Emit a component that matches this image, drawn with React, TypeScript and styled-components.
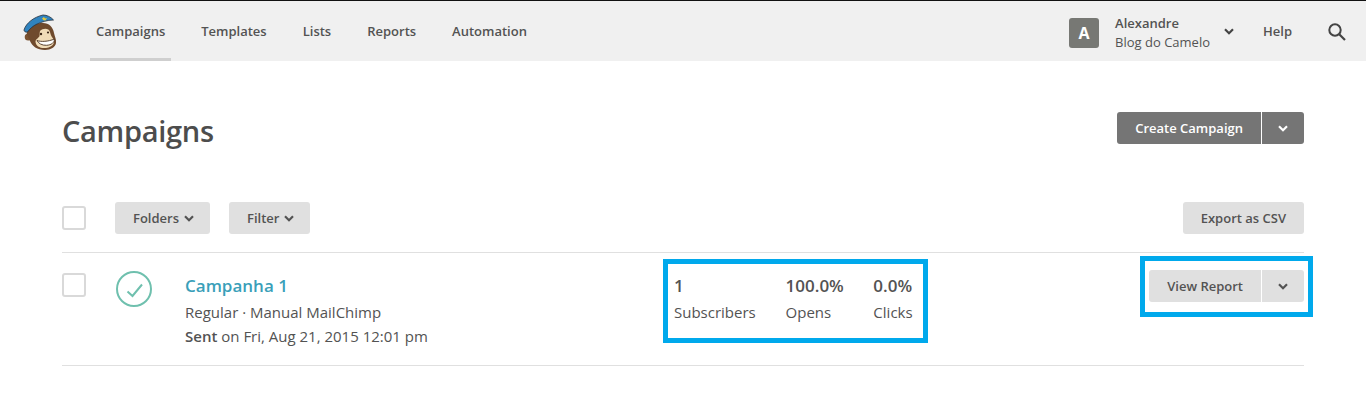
import React from 'react';
import styled, { createGlobalStyle } from 'styled-components';

const GlobalStyle = createGlobalStyle`
  html, body {
    margin: 0;
    padding: 0;
    background: #fff;
    font-family: "Open Sans", "Liberation Sans", sans-serif;
    color: #535353;
  }
`;

const TopBar = styled.header`
  display: flex;
  align-items: stretch;
  height: 60px;
  border-top: 1px solid #111;
  background: #f0f0f0;
  padding: 0 19px 0 23px;
`;

const Logo = styled.div`
  display: flex;
  align-items: center;
  width: 67px;
  padding-top: 4px;
`;

const NavLinks = styled.nav`
  display: flex;
  flex: 1;
`;

const NavLink = styled.a<{ $active?: boolean }>`
  display: flex;
  align-items: center;
  box-sizing: border-box;
  height: 60px;
  padding: 0 6px 1px;
  margin-right: 24px;
  font-size: 13px;
  font-weight: 600;
  color: #535353;
  border-bottom: 3px solid ${(p) => (p.$active ? '#cfcfcf' : 'transparent')};
  border-top: 3px solid transparent;
`;

const Account = styled.div`
  display: flex;
  align-items: center;
`;

const Avatar = styled.div`
  display: flex;
  align-items: center;
  justify-content: center;
  width: 30px;
  height: 30px;
  margin: 4px 16px 0 0;
  border-radius: 3px;
  background: #777874;
  color: #fff;
  font-size: 16px;
  font-weight: 700;
`;

const AccountText = styled.div`
  display: flex;
  flex-direction: column;
  font-size: 13px;
  line-height: 19px;
  margin: 4px 14px 0 0;

  strong {
    font-weight: 600;
  }
`;

const HelpLink = styled.a`
  font-size: 13px;
  font-weight: 600;
  margin-left: 29px;
  margin-right: 36px;
`;

const Page = styled.main`
  padding: 0 62px;
`;

const TitleRow = styled.div`
  display: flex;
  align-items: flex-start;
  justify-content: space-between;
  padding-top: 51px;
  height: 90px;
`;

const Title = styled.h1`
  margin: -1px 0 0;
  font-size: 29px;
  line-height: 40px;
  font-weight: 600;
  color: #4d4d4d;
  letter-spacing: -0.3px;
`;

const SplitButton = styled.div`
  display: flex;
  gap: 1px;
`;

const Button = styled.button<{ $dark?: boolean; $side?: 'left' | 'right' }>`
  display: flex;
  align-items: center;
  justify-content: center;
  height: 32px;
  padding: 0 ${(p) => (p.$side === 'right' ? 16 : 18)}px;
  border: 0;
  font-family: inherit;
  font-size: 13px;
  font-weight: 600;
  background: ${(p) => (p.$dark ? '#757575' : '#e0e0e0')};
  color: ${(p) => (p.$dark ? '#fff' : '#535353')};
  border-radius: ${(p) =>
    p.$side === 'left' ? '3px 0 0 3px' : p.$side === 'right' ? '0 3px 3px 0' : '3px'};
`;

const MenuButton = styled(Button)`
  gap: 5px;
  padding-right: 16px;
`;

const ToolRow = styled.div`
  display: flex;
  align-items: center;
  height: 32px;
  padding-bottom: 18px;
  border-bottom: 1px solid #e0e0e0;
`;

const Checkbox = styled.span`
  display: block;
  box-sizing: border-box;
  width: 24px;
  height: 24px;
  border: 2px solid #d9d9d9;
  border-radius: 3px;
  background: #fff;
  flex-shrink: 0;
`;

const ToolButtons = styled.div`
  display: flex;
  flex: 1;
  gap: 19px;
  margin-left: 29px;
`;

const CampaignRow = styled.div`
  display: flex;
  align-items: flex-start;
  height: 112px;
  border-bottom: 1px solid #e0e0e0;
`;

const RowCheck = styled.div`
  margin-top: 20px;
`;

const StatusIcon = styled.div`
  margin: 18px 33px 0 30px;
  width: 36px;
  height: 36px;
`;

const Info = styled.div`
  width: 478px;
  padding-top: 21px;
  font-size: 15px;
  line-height: 24px;

  strong {
    font-weight: 600;
  }
`;

const CampaignName = styled.a`
  display: block;
  font-size: 17px;
  font-weight: 600;
  line-height: 24px;
  color: #3a9fb9;
  margin-bottom: 2px;
`;

const Stats = styled.div`
  display: flex;
  box-sizing: border-box;
  width: 265px;
  height: 84px;
  margin-top: 6px;
  padding: 9px 6px 0;
  border: 5px solid #00a9ec;
`;

const Stat = styled.div<{ $width: number }>`
  width: ${(p) => p.$width}px;
  font-size: 15px;
  line-height: 26px;

  strong {
    display: block;
    font-size: 17px;
    font-weight: 600;
  }
`;

const Actions = styled.div`
  position: relative;
  margin-left: auto;
  margin-top: 17px;
`;

const Highlight = styled.span`
  position: absolute;
  inset: -14px -9px -15px -9px;
  border: 5px solid #00a9ec;
`;

const Chevron = ({ color = '#535353' }: { color?: string }) => (
  <svg width="10" height="7" viewBox="0 0 10 7" fill="none">
    <path d="M1 1.300 5 5.200l4-3.900" stroke={color} strokeWidth="2.200" />
  </svg>
);

const Monkey = () => (
  <svg width="34" height="38" viewBox="0 0 34 38">
    <circle cx="5.300" cy="23" r="3.600" fill="#7a5230" />
    <path d="M4 17C7 11 13 9 20 9c6 0 10 4 11 10 .5 3 2.500 6 2 10-.6 4-5 7-11 7-8 0-13-4-15-9-1-3-4-6-3-10Z" fill="#6f4a2d" />
    <path d="M17 17c3-3 9-3 10 1 .7 2.500 1 4 3 6.500 2.500 3.500.5 8.500-7 9.500-6 .7-10-2-10.500-6-.2-3 3.500-4 4-6 .3-2 0-3.500.500-5Z" fill="#f0dcb8" />
    <path d="M14 26.500c4 1.500 11 1.200 17.500-1.500 0 3.500-3 6-8 6.300-4.500.2-8-1.800-9.500-4.800Z" fill="#fff" stroke="#4b3220" strokeWidth=".9" />
    <circle cx="18" cy="20" r="1.200" fill="#3a2618" />
    <circle cx="25" cy="18.500" r="1.100" fill="#3a2618" />
    <path d="M1 16C3 9 11 3 20 1c4 0 8 2 10.500 5C24 6 19 8 14 10c-4 2-7 4.500-9.500 8C2.500 18.500 1 17.500 1 16Z" fill="#2f83bf" stroke="#24303c" strokeWidth=".8" />
    <path d="M19 4.500 21 3l1 1.500 2-.5-1.500 2.500-2-.3Z" fill="#e8c93a" />
  </svg>
);

const SearchIcon = () => (
  <svg width="19" height="19" viewBox="0 0 19 19" fill="none">
    <circle cx="7" cy="8" r="5.700" stroke="#444" strokeWidth="2" />
    <path d="m11.200 12.200 5.800 5.800" stroke="#444" strokeWidth="2.200" />
  </svg>
);

const SentIcon = () => (
  <svg width="36" height="36" viewBox="0 0 36 36" fill="none">
    <circle cx="18" cy="18" r="17" stroke="#6fc0ae" strokeWidth="2" />
    <path d="m11.500 20.500 5 4.500 9.500-11.500" stroke="#6fc0ae" strokeWidth="2" />
  </svg>
);

const App: React.FC = () => {
  return (
    <>
      <GlobalStyle />
      <TopBar>
        <Logo>
          <Monkey />
        </Logo>
        <NavLinks>
          <NavLink $active>Campaigns</NavLink>
          <NavLink>Templates</NavLink>
          <NavLink>Lists</NavLink>
          <NavLink>Reports</NavLink>
          <NavLink>Automation</NavLink>
        </NavLinks>
        <Account>
          <Avatar>A</Avatar>
          <AccountText>
            <strong>Alexandre</strong>
            <span>Blog do Camelo</span>
          </AccountText>
          <Chevron color="#444" />
          <HelpLink>Help</HelpLink>
          <SearchIcon />
        </Account>
      </TopBar>
      <Page>
        <TitleRow>
          <Title>Campaigns</Title>
          <SplitButton>
            <Button $dark $side="left">Create Campaign</Button>
            <Button $dark $side="right"><Chevron color="#fff" /></Button>
          </SplitButton>
        </TitleRow>
        <ToolRow>
          <Checkbox />
          <ToolButtons>
            <MenuButton>Folders<Chevron /></MenuButton>
            <MenuButton>Filter<Chevron /></MenuButton>
          </ToolButtons>
          <Button>Export as CSV</Button>
        </ToolRow>
        <CampaignRow>
          <RowCheck>
            <Checkbox />
          </RowCheck>
          <StatusIcon>
            <SentIcon />
          </StatusIcon>
          <Info>
            <CampaignName>Campanha 1</CampaignName>
            <div>Regular · Manual MailChimp</div>
            <div><strong>Sent</strong> on Fri, Aug 21, 2015 12:01 pm</div>
          </Info>
          <Stats>
            <Stat $width={112.5}><strong>1</strong>Subscribers</Stat>
            <Stat $width={88.5}><strong>100.0%</strong>Opens</Stat>
            <Stat $width={44}><strong>0.0%</strong>Clicks</Stat>
          </Stats>
          <Actions>
            <Highlight />
            <SplitButton>
              <Button $side="left">View Report</Button>
              <Button $side="right"><Chevron /></Button>
            </SplitButton>
          </Actions>
        </CampaignRow>
      </Page>
    </>
  );
};

export default App;
